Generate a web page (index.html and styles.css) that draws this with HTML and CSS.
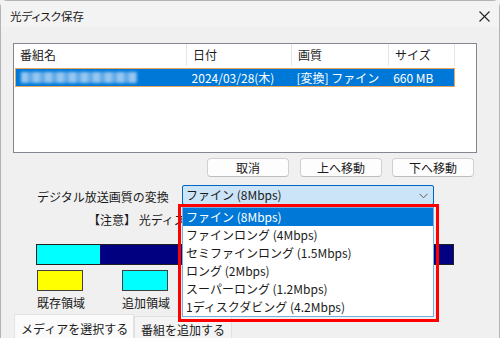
FILE: index.html
```html
<!DOCTYPE html>
<html lang="ja">
<head>
<meta charset="utf-8">
<title>光ディスク保存</title>
<link rel="stylesheet" href="styles.css">
</head>
<body>
<div class="window">
  <div class="titlebar">
    <span class="title">光ディスク保存</span>
    <svg class="close" width="11" height="11" viewBox="0 0 11 11"><path d="M0.5 0.5 L10.5 10.5 M10.5 0.5 L0.5 10.5" stroke="#222" stroke-width="1.1" fill="none"/></svg>
  </div>
  <div class="client">
    <div class="listbox">
      <div class="lv-header">
        <div class="hcell c1">番組名</div>
        <div class="hcell c2">日付</div>
        <div class="hcell c3">画質</div>
        <div class="hcell c4">サイズ</div>
      </div>
      <div class="lv-row">
        <div class="cell r1"><span class="blurred"></span></div>
        <div class="cell r2">2024/03/28(木)</div>
        <div class="cell r3">[変換] ファイン</div>
        <div class="cell r4">660 MB</div>
      </div>
    </div>
    <div class="buttons">
      <button class="btn">取消</button>
      <button class="btn">上へ移動</button>
      <button class="btn">下へ移動</button>
    </div>
    <div class="quality-row">
      <span class="quality-label">デジタル放送画質の変換</span>
      <div class="select">
        <span>ファイン (8Mbps)</span>
        <svg class="chevron" width="9" height="6" viewBox="0 0 9 6"><path d="M0.5 0.8 L4.5 4.8 L8.5 0.8" stroke="#606060" stroke-width="1" fill="none"/></svg>
      </div>
    </div>
    <div class="note">【注意】 光ディスクに書き込める容量を超えています</div>
    <div class="bar"><div class="bar-used" style="width:63px"></div></div>
    <div class="legend">
      <div class="legend-item"><span class="swatch existing"></span><span class="legend-label">既存領域</span></div>
      <div class="legend-item"><span class="swatch added"></span><span class="legend-label">追加領域</span></div>
    </div>
    <div class="tabs">
      <div class="tab active">メディアを選択する</div>
      <div class="tab">番組を追加する</div>
    </div>
  </div>
  <div class="dropdown">
    <div class="opt selected">ファイン (8Mbps)</div>
    <div class="opt">ファインロング (4Mbps)</div>
    <div class="opt">セミファインロング (1.5Mbps)</div>
    <div class="opt">ロング (2Mbps)</div>
    <div class="opt">スーパーロング (1.2Mbps)</div>
    <div class="opt">1ディスクダビング (4.2Mbps)</div>
  </div>
  <div class="highlight"></div>
</div>
</body>
</html>
```
FILE: styles.css
```css
* { box-sizing: border-box; }
html, body {
  margin: 0;
  padding: 0;
  width: 500px;
  height: 338px;
  overflow: hidden;
  background: #f0f0f0;
}
body {
  font-family: "Noto Sans CJK JP", "Noto Sans", sans-serif;
  font-size: 12px;
  color: #1a1a1a;
}
.window {
  position: relative;
  width: 500px;
  height: 340px;
  border: 1px solid #b4b4b4;
  border-radius: 7px 7px 0 0;
  background: #f0f0f0;
}
.titlebar {
  height: 26px;
  display: flex;
  align-items: center;
  justify-content: space-between;
  padding: 0 9px 0 9px;
  background: #f3f3f3;
}
.title {
  font-size: 11.5px;
  line-height: 16px;
  padding-top: 3px;
  font-feature-settings: "palt";
}
.close { margin-top: 4px; }
.client {
  padding: 16px 0 0 12px;
}
.listbox {
  width: 464px;
  height: 110px;
  border: 1px solid #828790;
  background: #fff;
}
.lv-header {
  display: flex;
  height: 22px;
}
.hcell {
  border-right: 1px solid #e5e5e5;
  padding-left: 6px;
  line-height: 22px;
}
.c1 { width: 173px; }
.c2 { width: 105px; }
.c3 { width: 97px; }
.c4 { width: 66px; }
.lv-row {
  display: flex;
  margin: 2px 0 0 1px;
  width: 440px;
  height: 19px;
  background: #0078d7;
  border: 1px solid #e9a65a;
  color: #fff;
  line-height: 17px;
}
.cell { padding-left: 5px; white-space: nowrap; }
.r1 { width: 171px; display: flex; align-items: center; }
.r2 { width: 105px; }
.r3 { width: 97px; }
.r4 { width: 66px; }
.blurred {
  display: block;
  width: 116px;
  height: 11px;
  background: repeating-linear-gradient(90deg, #a6d0f4 0 7px, #6db0ea 7px 12px);
  filter: blur(1.6px);
  opacity: 0.9;
}
.buttons {
  display: flex;
  gap: 10px;
  margin: 5px 0 0 194px;
}
.btn {
  width: 82px;
  height: 19px;
  border: 1px solid #d0d0d0;
  border-bottom-color: #bdbdbd;
  border-radius: 4px;
  background: #fdfdfd;
  font: inherit;
  font-size: 12px;
  line-height: 15px;
  color: #1a1a1a;
  padding: 0;
}
.buttons .btn:first-child { margin-right: 1px; }
.quality-row {
  display: flex;
  align-items: center;
  margin-top: 7px;
}
.quality-label {
  margin-left: 24px;
  width: 145px;
  padding-top: 4px;
  white-space: nowrap;
}
.select {
  width: 252px;
  height: 20px;
  border: 1px solid #0067c0;
  background: #cce4f7;
  border-radius: 2px;
  display: flex;
  align-items: center;
  justify-content: space-between;
  padding: 0 5px 0 3px;
  line-height: 16px;
}
.chevron { margin-top: 2px; }
.note {
  margin: 7px 0 0 75px;
  width: 96px;
  overflow: hidden;
  line-height: 16px;
  white-space: nowrap;
}
.bar {
  margin: 16px 0 0 23px;
  width: 418px;
  height: 21px;
  border: 1px solid #202020;
  background: #000080;
}
.bar-used {
  height: 100%;
  background: #00ffff;
}
.legend {
  display: flex;
  gap: 37px;
  margin: 5px 0 0 24px;
}
.legend-item {
  display: flex;
  flex-direction: column;
  gap: 4px;
}
.swatch {
  display: block;
  width: 46px;
  height: 21px;
  border: 1px solid #404040;
}
.existing { background: #ffff00; }
.added { background: #00ffff; }
.legend-label { line-height: 16px; white-space: nowrap; }
.tabs {
  display: flex;
  margin: 3px 0 0 1px;
  height: 26px;
  border-bottom: 1px solid #d9d9d9;
}
.tab {
  padding: 4px 6px 0 6px;
  line-height: 18px;
  font-size: 12px;
  border: 1px solid #e0e0e0;
  border-bottom: none;
  background: #f4f4f4;
  margin-top: 2px;
  white-space: nowrap;
}
.tab.active {
  background: #fbfbfb;
  width: 120px;
  margin-top: 0;
  padding-top: 5px;
  border-color: #e3e3e3;
}
.dropdown {
  position: absolute;
  left: 181px;
  top: 206px;
  width: 252px;
  height: 110px;
  border: 1px solid #7aaee0;
  background: #fff;
}
.opt {
  height: 18px;
  line-height: 18px;
  padding-left: 3px;
  white-space: nowrap;
}
.opt.selected {
  background: #0078d7;
  color: #fff;
}
.highlight {
  position: absolute;
  left: 177px;
  top: 203px;
  width: 261px;
  height: 118px;
  border: 3px solid #ff0000;
}
```
